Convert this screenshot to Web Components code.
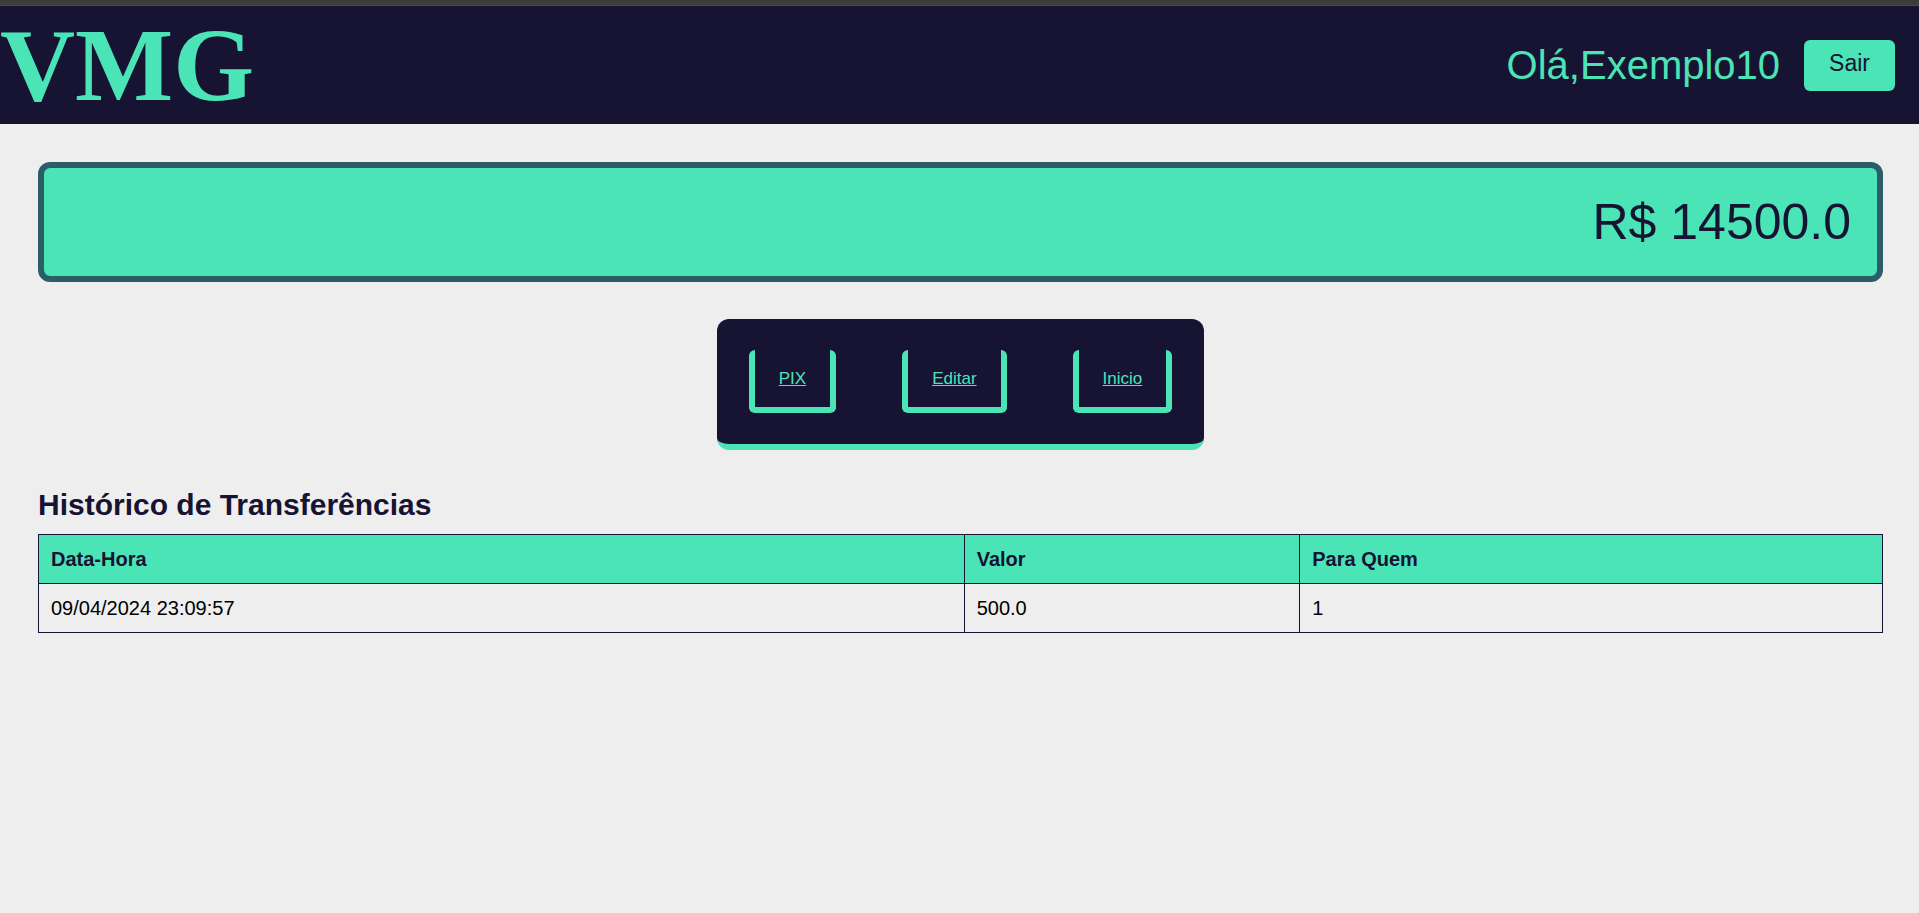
<!DOCTYPE html>
<html lang="pt-BR">
<head>
<meta charset="utf-8">
<meta name="viewport" content="width=device-width, initial-scale=1">
<title>VMG</title>
<style>
  :root {
    --mint: #4ae4b7;
    --ink: #171332;
    --teal: #2b5d69;
    --page: #eeeeee;
  }
  body {
    margin: 0;
    background: var(--page);
    color: #000;
    font-family: "Liberation Sans", Arial, sans-serif;
  }
</style>
</head>
<body>
<vmg-app>
  <vmg-header slot="header" user="Exemplo10"></vmg-header>
  <vmg-balance>R$ 14500.0</vmg-balance>
  <vmg-nav>
    <vmg-nav-link href="#pix">PIX</vmg-nav-link>
    <vmg-nav-link href="#editar">Editar</vmg-nav-link>
    <vmg-nav-link href="#inicio">Inicio</vmg-nav-link>
  </vmg-nav>
  <vmg-history></vmg-history>
</vmg-app>

<script>
class BaseElement extends HTMLElement {
  connectedCallback() {
    if (this.shadowRoot) return;
    this.attachShadow({ mode: "open" }).innerHTML = this.render();
  }
}

customElements.define("vmg-app", class extends BaseElement {
  render() {
    return `
      <style>
        :host { display: block; border-top: 5px solid #3c3c3c; }
        .edge { height: 1px; background: #484848; }
        main { display: flex; flex-direction: column; gap: 37px; padding: 38px 36px 38px 38px; }
      </style>
      <div class="edge"></div>
      <slot name="header"></slot>
      <main><slot></slot></main>`;
  }
});

customElements.define("vmg-header", class extends BaseElement {
  render() {
    return `
      <style>
        :host { display: block; }
        header {
          display: flex; align-items: center; justify-content: space-between;
          padding-right: 24px; background: var(--ink); color: var(--mint);
        }
        h1 { margin: 0; font: bold 104px/118px "Liberation Serif", "Times New Roman", serif; }
        .user { display: flex; align-items: center; gap: 24px; font-size: 40px; line-height: 46px; }
        button {
          padding: 10px 25px 14px; border: 0; border-radius: 6px;
          background: var(--mint); color: var(--ink);
          font: 23px/27px "Liberation Sans", Arial, sans-serif; cursor: pointer;
        }
      </style>
      <header>
        <h1>VMG</h1>
        <div class="user">
          <span>Olá,${this.getAttribute("user")}</span>
          <button type="button">Sair</button>
        </div>
      </header>`;
  }
});

customElements.define("vmg-balance", class extends BaseElement {
  render() {
    return `
      <style>
        :host {
          display: block; padding: 25px 26px; text-align: right;
          border: 6px solid var(--teal); border-radius: 12px;
          background: var(--mint); color: var(--ink);
          font-size: 50px; line-height: 58px;
        }
      </style>
      <slot></slot>`;
  }
});

customElements.define("vmg-nav", class extends BaseElement {
  render() {
    return `
      <style>
        :host { display: block; align-self: center; }
        nav {
          display: flex; gap: 66px; padding: 31px 32px;
          border-bottom: 6px solid var(--mint); border-radius: 12px;
          background: var(--ink);
        }
      </style>
      <nav><slot></slot></nav>`;
  }
});

customElements.define("vmg-nav-link", class extends BaseElement {
  render() {
    return `
      <style>
        :host { display: block; }
        a {
          display: block; padding: 19px 24px;
          border: solid var(--mint); border-width: 0 6px 6px; border-radius: 6px;
          color: var(--mint); font-size: 17px; line-height: 19px;
        }
      </style>
      <a href="${this.getAttribute("href")}"><slot></slot></a>`;
  }
});

customElements.define("vmg-history", class extends BaseElement {
  render() {
    return `
      <style>
        :host { display: block; }
        h2 { margin: 0 0 11px; color: var(--ink); font-size: 30px; line-height: 36px; }
        table { width: 100%; border-collapse: collapse; table-layout: fixed; font-size: 20px; line-height: 24px; }
        th, td { box-sizing: border-box; padding: 12px; border: 1px solid var(--ink); text-align: left; }
        th { background: var(--mint); color: var(--ink); }
        .when { width: 50.2%; }
        .value { width: 18.2%; }
      </style>
      <h2 id="title">Histórico de Transferências</h2>
      <table aria-labelledby="title">
        <thead>
          <tr><th class="when" scope="col">Data-Hora</th><th class="value" scope="col">Valor</th><th scope="col">Para Quem</th></tr>
        </thead>
        <tbody>
          <tr><td>09/04/2024 23:09:57</td><td>500.0</td><td>1</td></tr>
        </tbody>
      </table>`;
  }
});
</script>
</body>
</html>
